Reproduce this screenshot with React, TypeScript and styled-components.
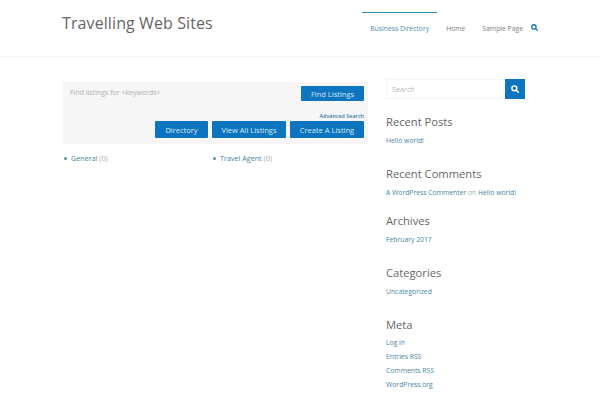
import React from "react";
import styled, { createGlobalStyle } from "styled-components";

const Global = createGlobalStyle`
  html, body { margin: 0; padding: 0; background: #fff; }
  body { width: 600px; height: 400px; overflow: hidden; font-family: "Open Sans", "Liberation Sans", sans-serif; }
  a { text-decoration: none; }
`;
const Page = styled.div`width: 600px; height: 400px; overflow: hidden;`;
const Header = styled.header`
  height: 56px; border-bottom: 1px solid #f4f4f4; display: flex; justify-content: space-between; padding: 0 62px; box-sizing: content-box;
`;
const Title = styled.h1`
  margin: 12px 0 0; font: 400 16px/22px "Open Sans", sans-serif; color: #666; letter-spacing: 0.1px;
`;
const Nav = styled.nav`display: flex; align-items: flex-start; margin-left: auto;`;
const NavItem = styled.a<{ $active?: boolean }>`
  display: block; height: 44px; margin-top: 12px; padding: 11px 8px 0; box-sizing: border-box; margin-right: 1px;
  border-top: 1px solid ${p => (p.$active ? "#2b8cb8" : "transparent")};
  font-size: 6.8px; line-height: 10px; color: ${p => (p.$active ? "#4a8fad" : "#808080")}; white-space: nowrap;
`;
const NavSearch = styled.span`margin-top: 24px; margin-left: -1px; color: #1a76b8; display: block; line-height: 0;`;
const Body = styled.div`display: flex; padding: 25px 75px 0 63px; gap: 18px;`;
const Main = styled.main`width: 305px; flex: none;`;
const Listing = styled.div`
  background: #f6f6f6; height: 62px; box-sizing: border-box; padding: 4px 4px 4px 7px; display: flex; flex-direction: column;
`;
const SearchRow = styled.div`display: flex; justify-content: space-between; align-items: flex-start;`;
const Hint = styled.span`font-size: 7px; line-height: 14px; color: #b0b0b0;`;
const Btn = styled.a<{ $w: number; $h: number }>`
  display: flex; align-items: center; justify-content: center; width: ${p => p.$w}px; height: ${p => p.$h}px;
  background: #0d74c0; color: #d5e8f5; font-size: 7.5px; border-radius: 1px; white-space: nowrap;
`;
const Adv = styled.a`align-self: flex-end; margin-top: 12px; font-size: 5.4px; line-height: 7px; font-weight: 600; color: #3a7ca5; `;
const BtnRow = styled.div`display: flex; justify-content: flex-end; gap: 4px; margin-top: 1px;`;
const Cats = styled.ul`display: grid; grid-template-columns: 149px 1fr; list-style: none; margin: 9px 0 0; padding: 0 0 0 1px;`;
const Cat = styled.li`display: flex; align-items: center; font-size: 7.2px; line-height: 11px; color: #aaa; white-space: pre;`;
const Dot = styled.i`width: 3px; height: 3px; border-radius: 50%; background: #5e8ea6; margin-right: 4px;`;
const Link = styled.a`color: #4a86a3;`;
const Side = styled.aside`width: 139px; flex: none;`;
const SearchBox = styled.div`display: flex; height: 20px; margin-bottom: 15px; margin-top: -3px;`;
const SearchInput = styled.div`
  flex: 1; border: 1px solid #f5f5f5; border-right: 0; font-size: 7.2px; line-height: 18px; color: #bbb; padding-left: 5px;
`;
const SearchBtn = styled.span`width: 20px; background: #0d74c0; color: #fff; display: flex; align-items: center; justify-content: center;`;
const Widget = styled.section<{ $h: number }>`height: ${p => p.$h}px;`;
const WTitle = styled.h2`margin: 0; font: 400 11.2px/16px "Open Sans", sans-serif; color: #666; `;
const WLine = styled.div`font-size: 6.8px; line-height: 14px; margin-top: 4px; color: #aaa; white-space: nowrap;`;
const WList = styled.div`margin-top: 3px; display: grid; grid-auto-rows: 14px; font-size: 6.8px; line-height: 14px;`;

const Glass = ({ s }: { s: number }) => (
  <svg width={s} height={s} viewBox="0 0 12 12" fill="none" stroke="currentColor" strokeWidth="2.2">
    <circle cx="5" cy="5" r="3.7" />
    <path d="M7.7 7.7 11 11" strokeLinecap="round" />
  </svg>
);

export default function App() {
  return (
    <Page>
      <Global />
      <Header>
        <Title>Travelling Web Sites</Title>
        <Nav>
          <NavItem $active>Business Directory</NavItem>
          <NavItem>Home</NavItem>
          <NavItem>Sample Page</NavItem>
          <NavSearch><Glass s={7} /></NavSearch>
        </Nav>
      </Header>
      <Body>
        <Main>
          <Listing>
            <SearchRow>
              <Hint>Find listings for &lt;keywords&gt;</Hint>
              <Btn $w={63} $h={15}>Find Listings</Btn>
            </SearchRow>
            <Adv>Advanced Search</Adv>
            <BtnRow>
              <Btn $w={53} $h={17}>Directory</Btn>
              <Btn $w={74} $h={17}>View All Listings</Btn>
              <Btn $w={74} $h={17}>Create A Listing</Btn>
            </BtnRow>
          </Listing>
          <Cats>
            <Cat><Dot /><Link>General</Link> (0)</Cat>
            <Cat><Dot /><Link>Travel Agent</Link> (0)</Cat>
          </Cats>
        </Main>
        <Side>
          <SearchBox>
            <SearchInput>Search</SearchInput>
            <SearchBtn><Glass s={8} /></SearchBtn>
          </SearchBox>
          <Widget $h={52}><WTitle>Recent Posts</WTitle><WLine><Link>Hello world!</Link></WLine></Widget>
          <Widget $h={47}><WTitle>Recent Comments</WTitle><WLine><Link>A WordPress Commenter</Link> on <Link>Hello world!</Link></WLine></Widget>
          <Widget $h={52}><WTitle>Archives</WTitle><WLine><Link>February 2017</Link></WLine></Widget>
          <Widget $h={52}><WTitle>Categories</WTitle><WLine><Link>Uncategorized</Link></WLine></Widget>
          <Widget $h={70}>
            <WTitle>Meta</WTitle>
            <WList><Link>Log in</Link><Link>Entries RSS</Link><Link>Comments RSS</Link><Link>WordPress.org</Link></WList>
          </Widget>
        </Side>
      </Body>
    </Page>
  );
}
